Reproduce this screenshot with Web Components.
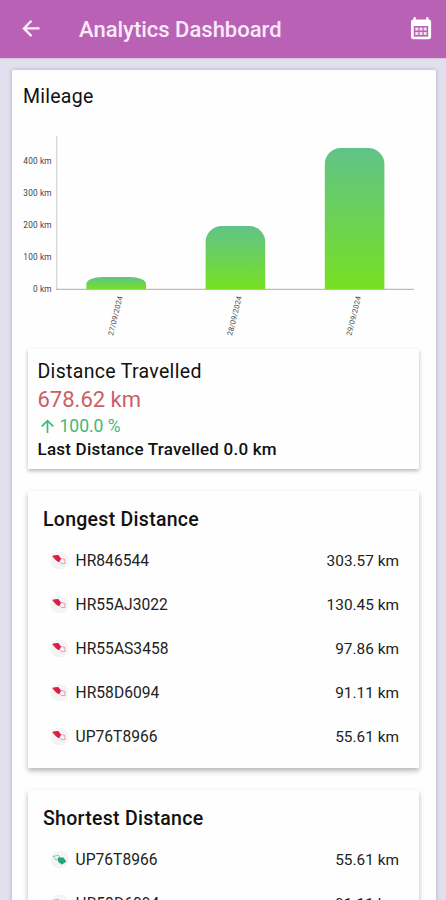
<!DOCTYPE html>
<html lang="en">
<head>
<meta charset="utf-8">
<meta name="viewport" content="width=device-width, initial-scale=1">
<title>Analytics Dashboard</title>
<style>
  html, body {
    margin: 0;
    height: 900px;
    overflow: hidden;
    background: #e2e0ee;
    font-family: Roboto, "Liberation Sans", sans-serif;
    color: #111;
  }
</style>
</head>
<body>
<dashboard-app>
  <app-bar slot="bar">Analytics Dashboard</app-bar>
  <mileage-chart></mileage-chart>
  <distance-summary total="678.62 km" change="100.0 %" last="0.0 km">Distance Travelled</distance-summary>
  <distance-list>
    <span slot="title">Longest Distance</span>
    <vehicle-row distance="303.57 km">HR846544</vehicle-row>
    <vehicle-row distance="130.45 km">HR55AJ3022</vehicle-row>
    <vehicle-row distance="97.86 km">HR55AS3458</vehicle-row>
    <vehicle-row distance="91.11 km">HR58D6094</vehicle-row>
    <vehicle-row distance="55.61 km">UP76T8966</vehicle-row>
  </distance-list>
  <distance-list>
    <span slot="title">Shortest Distance</span>
    <vehicle-row status="low" distance="55.61 km">UP76T8966</vehicle-row>
    <vehicle-row status="low" distance="91.11 km">HR58D6094</vehicle-row>
  </distance-list>
</dashboard-app>

<script>
class DashboardApp extends HTMLElement {
  constructor() {
    super();
    this.attachShadow({ mode: 'open' });
    this.shadowRoot.innerHTML = `
      <style>
        :host {
          display: flex;
          flex-direction: column;
          height: 900px;
          overflow: hidden;
        }
        main {
          flex: none;
          box-sizing: border-box;
          width: 424px;
          min-height: 900px;
          margin: 12px 0 0 12px;
          padding: 13px 17px 0 16px;
          border-radius: 2px;
          background: #fefefe;
          box-shadow: 0 0 4px rgba(90, 85, 125, 0.38);
        }
        h2 {
          margin: 0 0 -1px -5px;
          font-size: 19.5px;
          font-weight: 400;
          line-height: 28px;
          letter-spacing: 0.25px;
        }
      </style>
      <slot name="bar"></slot>
      <main>
        <h2>Mileage</h2>
        <slot></slot>
      </main>
    `;
  }
}

class AppBar extends HTMLElement {
  constructor() {
    super();
    this.attachShadow({ mode: 'open' });
    this.shadowRoot.innerHTML = `
      <style>
        :host {
          flex: none;
          display: flex;
          align-items: center;
          box-sizing: border-box;
          height: 58px;
          padding: 0 12px 0 19px;
          background: #b962b5;
          color: #fbeafa;
          box-shadow: 0 0 2px rgba(185, 98, 181, 0.6);
        }
        h1 {
          flex: 1;
          margin: 2px 0 0 36px;
          font-size: 22px;
          font-weight: 500;
          line-height: 30px;
          white-space: nowrap;
        }
        svg { display: block; flex: none; }
      </style>
      <svg width="24" height="24" viewBox="0 0 24 24" fill="none" stroke="#fcecfb" stroke-width="2.3">
        <path d="M20.5 11.4H5.5M12.5 3.7L4.9 11.4L12.5 19.1"/>
      </svg>
      <h1><slot></slot></h1>
      <svg width="26" height="26" viewBox="0 0 26 26">
        <path fill="#fff" d="M5.5 1.3h2.3v2.3h10.4V1.3h2.3v2.3h.3a2.3 2.3 0 0 1 2.3 2.3v15.1a2.3 2.3 0 0 1-2.3 2.3H5.3A2.3 2.3 0 0 1 3 21V5.9a2.3 2.3 0 0 1 2.3-2.3h.2z"/>
        <path fill="#b962b5" d="M5.8 10h14.4v10.6H5.8z"/>
        <path fill="#fff" d="M7.3 11.6h3v3h-3zM11.5 11.6h3v3h-3zM15.7 11.6h3v3h-3zM7.3 15.9h3v3h-3zM11.5 15.9h3v3h-3zM15.7 15.9h3v3h-3z" opacity=".8"/>
      </svg>
    `;
  }
}

class MileageChart extends HTMLElement {
  constructor() {
    super();
    this.attachShadow({ mode: 'open' });
  }

  connectedCallback() {
    const ticks = [400, 300, 200, 100, 0];
    const days = [
      { label: '27/09/2024', top: 167, radius: 7 },
      { label: '28/09/2024', top: 116, radius: 16 },
      { label: '29/09/2024', top: 38, radius: 16 }
    ];
    const base = 179;

    const tickLabels = ticks.map((t, i) =>
      `<text class="tick" x="39.8" y="${54 + i * 32}">${t} km</text>`
    ).join('');

    const bars = days.map((d, i) => {
      const x = 74.4 + i * 119.2;
      const r = d.radius;
      return `
        <path fill="url(#bar)" d="M${x} ${base}V${d.top + r}a16 ${r} 0 0 1 16 ${-r}h27.6a16 ${r} 0 0 1 16 ${r}V${base}z"/>
        <text class="day" transform="translate(${x + 26.5} 226) rotate(-76)">${d.label}</text>
      `;
    }).join('');

    this.shadowRoot.innerHTML = `
      <style>
        :host {
          display: block;
          height: 239px;
          margin-left: -16px;
        }
        svg { display: block; }
        text { fill: #444; }
        .tick { font-size: 8.3px; letter-spacing: 0.15px; text-anchor: end; }
        .day { font-size: 7.4px; letter-spacing: 0.1px; }
      </style>
      <svg width="424" height="239" viewBox="0 0 424 239">
        <defs>
          <linearGradient id="bar" x1="0" y1="0" x2="0" y2="1">
            <stop offset="0" stop-color="#60c388"/>
            <stop offset="1" stop-color="#77e022"/>
          </linearGradient>
        </defs>
        <path d="M44.7 26V179.3" stroke="#d6d6d6" stroke-width="1.3"/>
        <path d="M44 179.3H402" stroke="#bcbcbc" stroke-width="1.2"/>
        ${tickLabels}
        ${bars}
      </svg>
    `;
  }
}

class DistanceSummary extends HTMLElement {
  constructor() {
    super();
    this.attachShadow({ mode: 'open' });
  }

  connectedCallback() {
    this.shadowRoot.innerHTML = `
      <style>
        :host {
          display: block;
          box-sizing: border-box;
          height: 120px;
          padding: 9px 9.5px;
          background: #fefefe;
          box-shadow: 0 2px 4px rgba(0, 0, 0, 0.28);
          white-space: nowrap;
        }
        .title { font-size: 19.5px; line-height: 27px; letter-spacing: 0.32px; }
        .total { font-size: 22px; line-height: 29px; color: #cb5f65; }
        .change {
          display: flex;
          align-items: center;
          font-size: 17.5px;
          line-height: 24px;
          color: #43b87c;
        }
        .change svg { margin: 0 5px 0 2px; }
        .last { font-size: 17px; line-height: 23px; font-weight: 500; letter-spacing: 0.22px; }
      </style>
      <div class="title"><slot></slot></div>
      <div class="total">${this.getAttribute('total')}</div>
      <div class="change">
        <svg width="15" height="15" viewBox="0 0 15 15" fill="none" stroke="currentColor" stroke-width="1.7">
          <path d="M7.5 14V2M1.8 7.3L7.5 1.6L13.2 7.3"/>
        </svg>
        <span>${this.getAttribute('change')}</span>
      </div>
      <div class="last">Last Distance Travelled ${this.getAttribute('last')}</div>
    `;
  }
}

class DistanceList extends HTMLElement {
  constructor() {
    super();
    this.attachShadow({ mode: 'open' });
    this.shadowRoot.innerHTML = `
      <style>
        :host {
          display: block;
          box-sizing: border-box;
          margin-top: 22px;
          padding: 15px 20px 10px 15px;
          background: #fefefe;
          box-shadow: 0 3px 5px rgba(0, 0, 0, 0.28);
        }
        h3 {
          margin: 0 0 4px;
          font-size: 19.5px;
          font-weight: 500;
          line-height: 28px;
          letter-spacing: 0.28px;
        }
      </style>
      <h3><slot name="title"></slot></h3>
      <slot></slot>
    `;
  }
}

class VehicleRow extends HTMLElement {
  constructor() {
    super();
    this.attachShadow({ mode: 'open' });
  }

  connectedCallback() {
    const low = this.getAttribute('status') === 'low';
    // filled tag with an outlined one behind it, mirrored for the low list
    const icon = low
      ? `<g stroke="#1fa971" stroke-linejoin="round">
           <path fill="none" stroke-width="1" opacity=".55" d="M3.2 6.4l5.2-1.1 1.6 2.4-4 2.4z"/>
           <path fill="#1fa971" stroke-width="1.6" d="M8.6 8.4l4.4-.2 2.3 3.2-3.4 2.2-3-2.2z"/>
         </g>`
      : `<g stroke="#dc1f46" stroke-linejoin="round">
           <path fill="#dc1f46" stroke-width="1.4" d="M3.2 5.2l5-.4 2.1 3-1.6 2.5-2.5-1.7z"/>
           <path fill="none" stroke-width="1" opacity=".4" d="M10.7 7.4l4 .9.4 4.1-3.6.3-2.1-2"/>
         </g>`;

    this.shadowRoot.innerHTML = `
      <style>
        :host {
          display: flex;
          align-items: center;
          height: 44px;
          font-size: 15.6px;
          line-height: 20px;
          color: #222;
        }
        svg { flex: none; margin: 0 6.5px 0 7px; }
        span { padding-top: 2px; }
        .plate { flex: 1; letter-spacing: 0.03px; }
        .distance { font-size: 15.4px; }
      </style>
      <svg width="19" height="19" viewBox="0 0 19 19">
        <circle cx="9.5" cy="9.5" r="9" fill="#f4f4f4"/>
        ${icon}
      </svg>
      <span class="plate"><slot></slot></span>
      <span class="distance">${this.getAttribute('distance')}</span>
    `;
  }
}

customElements.define('dashboard-app', DashboardApp);
customElements.define('app-bar', AppBar);
customElements.define('mileage-chart', MileageChart);
customElements.define('distance-summary', DistanceSummary);
customElements.define('distance-list', DistanceList);
customElements.define('vehicle-row', VehicleRow);
</script>
</body>
</html>
